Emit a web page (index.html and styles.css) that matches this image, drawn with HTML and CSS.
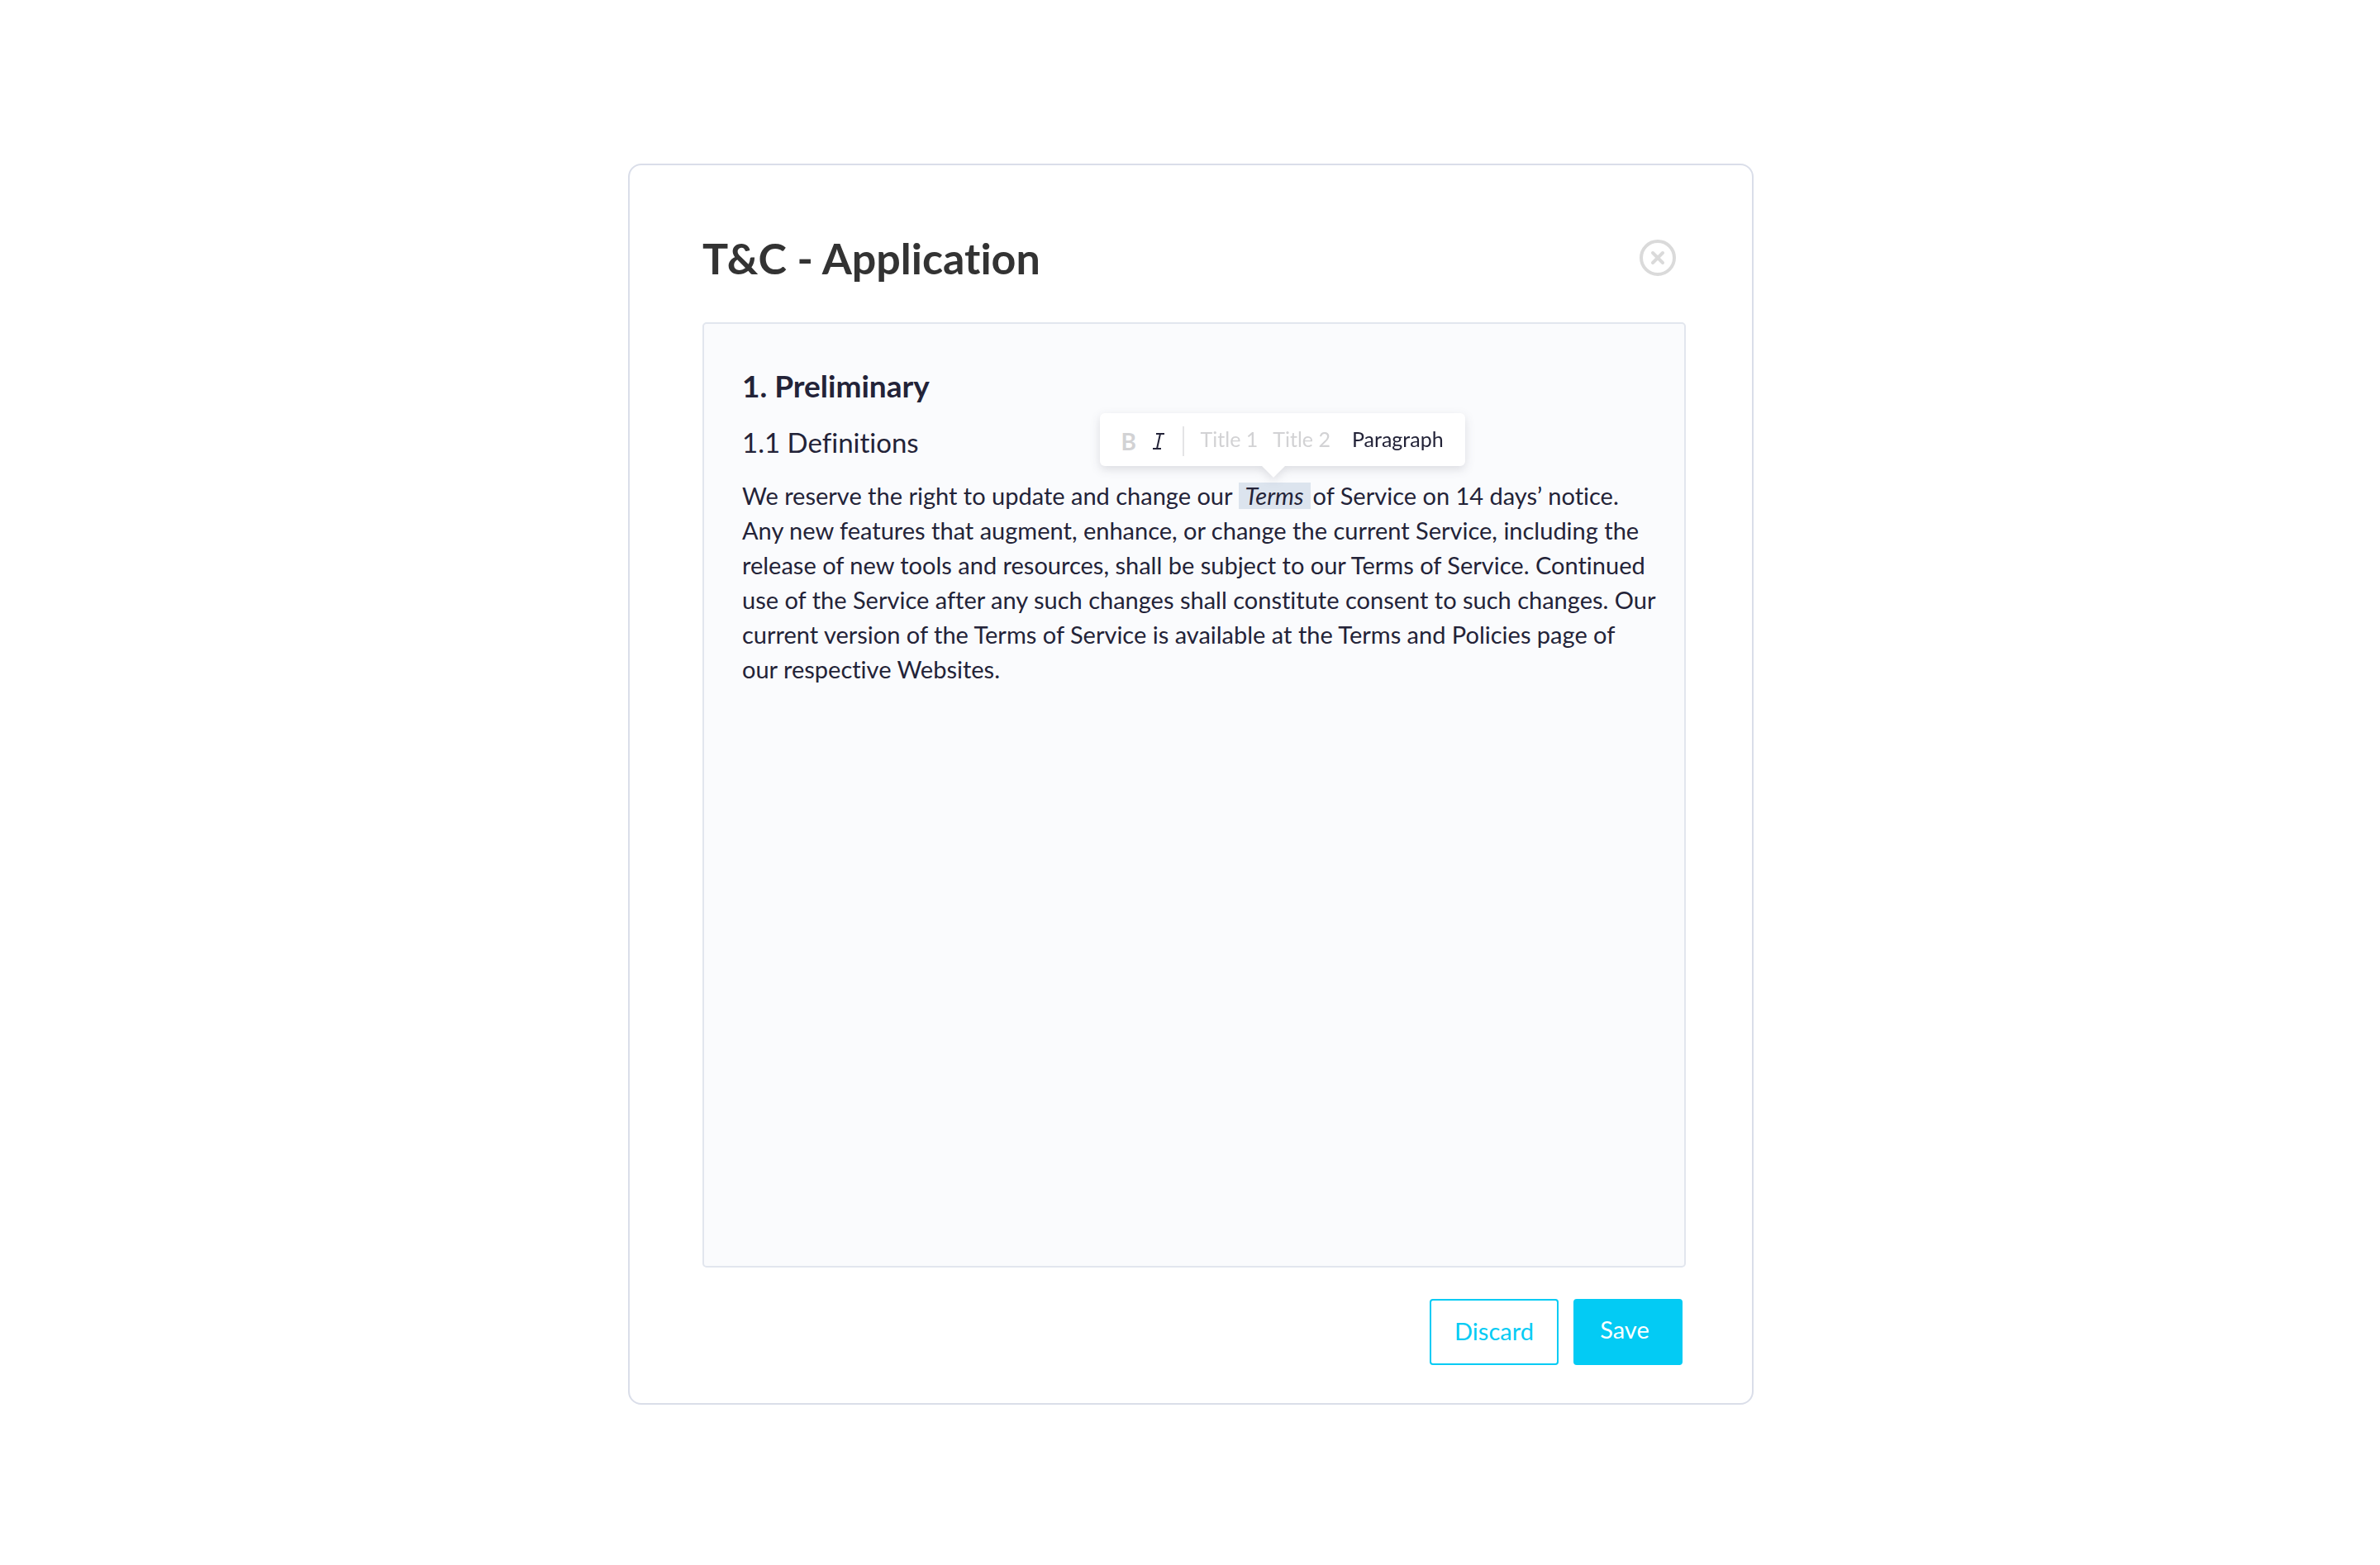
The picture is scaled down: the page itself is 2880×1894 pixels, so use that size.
FILE: index.html
```html
<!DOCTYPE html>
<html lang="en">
<head>
  <meta charset="utf-8">
  <meta name="viewport" content="width=device-width, initial-scale=1">
  <title>T&amp;C - Application</title>
  <link rel="stylesheet" href="styles.css">
</head>
<body>
  <main class="dialog" role="dialog" aria-labelledby="dialog-title">
    <header class="dialog-header">
      <h1 class="dialog-title" id="dialog-title">T&amp;C - Application</h1>
      <button class="close" type="button" aria-label="Close">
        <svg width="44" height="44" viewBox="0 0 44 44" fill="none" stroke="currentColor" stroke-width="4" stroke-linecap="round" aria-hidden="true">
          <circle cx="22" cy="22" r="20"/>
          <path d="M16 16l12 12M28 16L16 28"/>
        </svg>
      </button>
    </header>

    <section class="editor" aria-label="Terms text">
      <h2 class="title-1">1. Preliminary</h2>
      <h3 class="title-2">1.1 Definitions</h3>
      <p class="paragraph">We reserve the right to update and change our<span class="selection"><mark class="selected">Terms</mark><span class="toolbar" role="toolbar" aria-label="Formatting">
        <button class="tool tool-bold" type="button" aria-label="Bold">B</button>
        <button class="tool tool-italic is-active" type="button" aria-label="Italic">
          <svg width="14" height="20" viewBox="0 0 14 20" fill="none" stroke="currentColor" stroke-width="2" aria-hidden="true">
            <path d="M4 1h10M0 19h10M9 1L5 19"/>
          </svg>
        </button>
        <span class="divider"></span>
        <button class="tool tool-title" type="button">Title 1</button>
        <button class="tool tool-title" type="button">Title 2</button>
        <button class="tool tool-paragraph is-active" type="button">Paragraph</button>
      </span></span>of Service on 14 days’ notice. Any new features that augment, enhance, or change the current Service, including the release of new tools and resources, shall be subject to our Terms of Service. Continued use of the Service after any such changes shall constitute consent to such changes. Our current version of the Terms of Service is available at the Terms and Policies page of our&nbsp;respective Websites.</p>
    </section>

    <footer class="actions">
      <button class="button button-outline" type="button">Discard</button>
      <button class="button button-primary" type="button">Save</button>
    </footer>
  </main>
</body>
</html>
```
FILE: styles.css
```css
* {
  box-sizing: border-box;
}

body {
  margin: 0;
  padding: 198px 24px 198px 26px;
  background: #ffffff;
  color: #232338;
  font-family: Lato, "Open Sans", sans-serif;
  font-variant-ligatures: none;
}

button {
  margin: 0;
  padding: 0;
  border: 0;
  background: none;
  font: inherit;
  cursor: pointer;
}

.dialog {
  max-width: 1362px;
  margin: 0 auto;
  padding: 82px 80px 46px 88px;
  border: 2px solid #dadee9;
  border-radius: 16px;
}

.dialog-header {
  display: flex;
  align-items: center;
  justify-content: space-between;
  margin-bottom: 48px;
  padding-right: 12px;
}

.dialog-title {
  margin: 0;
  color: #333333;
  font-size: 52px;
  font-weight: 700;
  line-height: 60px;
}

.close {
  display: flex;
  color: #dadada;
}

.editor {
  min-height: 1144px;
  padding: 51px 34px 50px 46px;
  border: 2px solid #e2e6ee;
  border-radius: 5px;
  background: #fafbfd;
}

.title-1 {
  margin: 0 0 24px;
  font-size: 37px;
  font-weight: 700;
  line-height: 48px;
}

.title-2 {
  margin: 0 0 24px;
  font-size: 33px;
  font-weight: 400;
  line-height: 40px;
}

.paragraph {
  margin: 0;
  font-size: 29px;
  line-height: 42px;
}

.selection {
  position: relative;
  display: inline-block;
  margin: 0 3px 0 7px;
  line-height: 32px;
}

.selected {
  display: block;
  padding: 0 8px;
  background: #dce4ee;
  color: inherit;
  font-style: italic;
}

.toolbar {
  position: absolute;
  bottom: 52px;
  left: -168px;
  display: flex;
  align-items: center;
  width: 442px;
  height: 64px;
  padding: 0 26px;
  border-radius: 6px;
  background: #ffffff;
  filter: drop-shadow(0 4px 6px rgba(35, 35, 56, 0.14));
  font-size: 25px;
  white-space: nowrap;
}

.toolbar::after {
  content: "";
  position: absolute;
  top: 100%;
  left: 196px;
  border: 14px solid transparent;
  border-top-color: #ffffff;
  border-bottom: 0;
}

.tool {
  padding-bottom: 2px;
  color: #d2d2d4;
}

.tool.is-active {
  color: #232338;
}

.tool-bold {
  width: 18px;
  margin-right: 20px;
  padding: 4px 0 0;
  font-size: 28px;
  font-weight: 700;
}

.tool-italic {
  display: flex;
  padding: 4px 0 0;
}

.divider {
  width: 2px;
  height: 36px;
  margin: 4px 20px 0 22px;
  background: #e4e4e6;
}

.tool-title {
  margin-right: 18px;
}

.tool-paragraph {
  margin-left: auto;
}

.actions {
  display: flex;
  justify-content: flex-end;
  gap: 18px;
  margin-top: 38px;
  padding-right: 4px;
}

.button {
  height: 80px;
  padding-bottom: 4px;
  border: 2px solid #03cbf4;
  border-radius: 4px;
  font-size: 29px;
}

.button-outline {
  width: 156px;
  color: #03cbf4;
}

.button-primary {
  width: 132px;
  padding: 0 8px 8px 0;
  background: #03cbf4;
  color: #ffffff;
}
```
